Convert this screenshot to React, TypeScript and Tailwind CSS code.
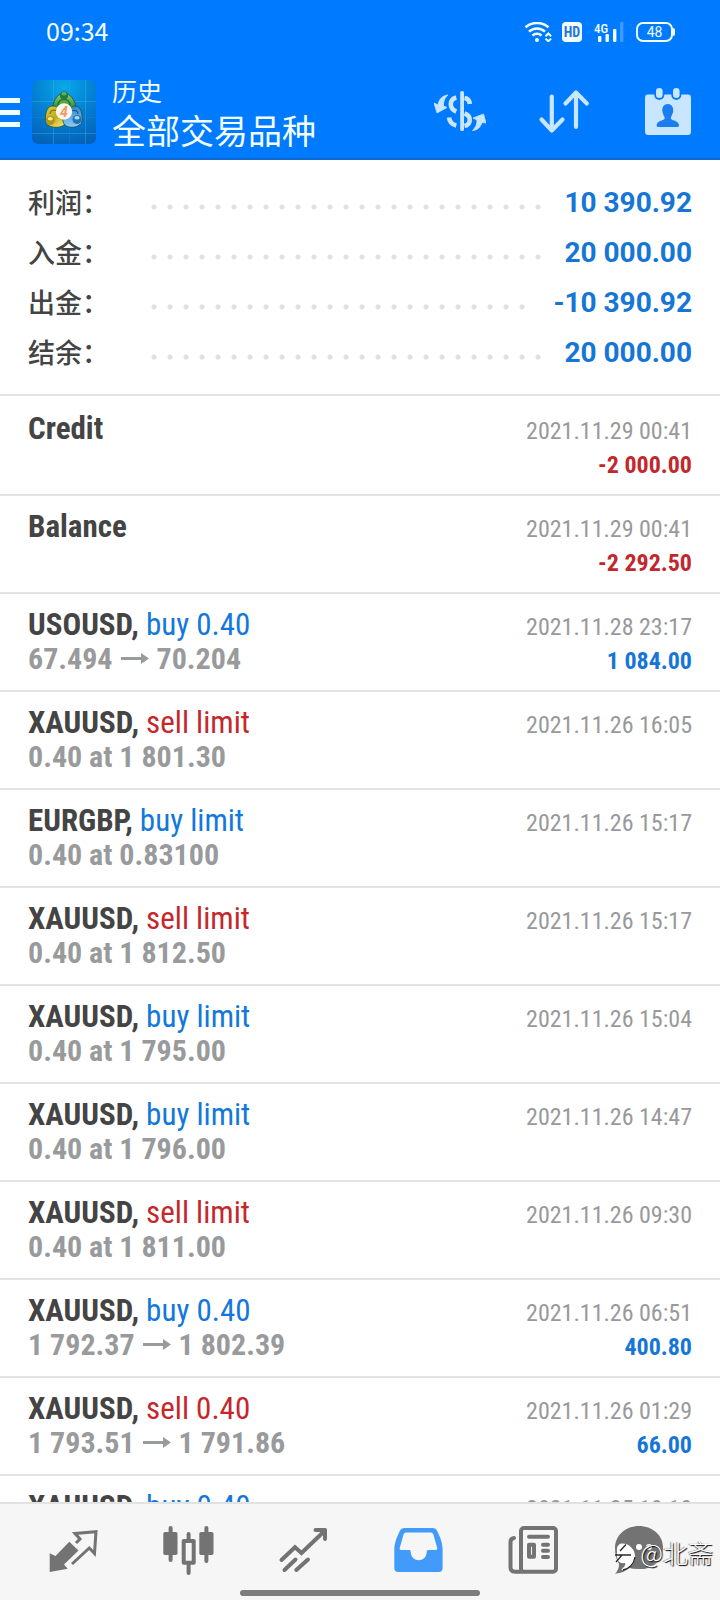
import type { ReactNode } from "react";

type Side = "buy" | "sell";

type Entry = {
  title: string;
  side?: Side;
  action?: string;
  open?: string;
  close?: string;
  time: string;
  amount?: string;
};

const summary = [
  { label: "利润：", value: "10 390.92" },
  { label: "入金：", value: "20 000.00" },
  { label: "出金：", value: "-10 390.92" },
  { label: "结余：", value: "20 000.00" },
];

const entries: Entry[] = [
  { title: "Credit", time: "2021.11.29 00:41", amount: "-2 000.00" },
  { title: "Balance", time: "2021.11.29 00:41", amount: "-2 292.50" },
  { title: "USOUSD,", side: "buy", action: "buy 0.40", open: "67.494", close: "70.204", time: "2021.11.28 23:17", amount: "1 084.00" },
  { title: "XAUUSD,", side: "sell", action: "sell limit", open: "0.40 at 1 801.30", time: "2021.11.26 16:05" },
  { title: "EURGBP,", side: "buy", action: "buy limit", open: "0.40 at 0.83100", time: "2021.11.26 15:17" },
  { title: "XAUUSD,", side: "sell", action: "sell limit", open: "0.40 at 1 812.50", time: "2021.11.26 15:17" },
  { title: "XAUUSD,", side: "buy", action: "buy limit", open: "0.40 at 1 795.00", time: "2021.11.26 15:04" },
  { title: "XAUUSD,", side: "buy", action: "buy limit", open: "0.40 at 1 796.00", time: "2021.11.26 14:47" },
  { title: "XAUUSD,", side: "sell", action: "sell limit", open: "0.40 at 1 811.00", time: "2021.11.26 09:30" },
  { title: "XAUUSD,", side: "buy", action: "buy 0.40", open: "1 792.37", close: "1 802.39", time: "2021.11.26 06:51", amount: "400.80" },
  { title: "XAUUSD,", side: "sell", action: "sell 0.40", open: "1 793.51", close: "1 791.86", time: "2021.11.26 01:29", amount: "66.00" },
  { title: "XAUUSD,", side: "buy", action: "buy 0.40", time: "2021.11.25 10:10" },
];

function StatusBar() {
  return (
    <div className="flex h-16 items-center justify-between pl-[46px] pr-[45px]">
      <span className="pb-1 font-['Noto_Sans_CJK_SC',sans-serif] text-[25px] leading-8">09:34</span>
      <div className="flex items-center">
        <svg className="mr-2 h-5 w-[30px]" viewBox="0 0 30 20" fill="none" stroke="currentColor" strokeWidth="2.6">
          <path d="M1.5 5.2C8 -0.4 18 -0.4 24.5 5.2" />
          <path d="M5 9.6C9.5 5.4 16.5 5.4 21 9.6" />
          <path d="M8.5 13.6C11 11.2 15 11.2 17.5 13.6" />
          <circle cx="13" cy="18" r="2" fill="currentColor" stroke="none" />
          <path d="M21.5 14.2L24.3 11.5L27.1 14.2M21.5 16.6L24.3 19.3L27.1 16.6" strokeWidth="2" />
        </svg>
        <span className="mr-3 flex h-5 w-5 items-center justify-center rounded-[4px] bg-[#f1ffff] font-['Roboto_Condensed',Roboto,sans-serif] text-sm font-bold text-[#2679d3]">
          HD
        </span>
        <svg className="mr-3 h-5 w-[30px]" viewBox="0 0 30 20" fill="currentColor">
          <text x="0" y="11" fontSize="13" fontWeight="500" fontFamily="Roboto Condensed, Roboto, sans-serif">4G</text>
          <rect x="4" y="14" width="3.4" height="6" rx="1" />
          <rect x="11.5" y="12" width="3.4" height="8" rx="1" />
          <rect x="19" y="7" width="3.4" height="13" rx="1" />
          <rect x="26" y="0" width="3.4" height="20" rx="1" opacity="0.25" />
        </svg>
        <span className="flex h-5 w-[37px] items-center justify-center rounded-[7px] border-2 border-current font-['Roboto',sans-serif] text-sm">
          48
        </span>
        <span className="h-2 w-0.5 rounded-r bg-current" />
      </div>
    </div>
  );
}

function AppLogo() {
  return (
    <svg className="h-16 w-16 shrink-0" viewBox="0 0 64 64">
      <defs>
        <radialGradient id="sky" cx="0.5" cy="0.1" r="0.95">
          <stop offset="0" stopColor="#08a8ea" />
          <stop offset="0.5" stopColor="#0480d2" />
          <stop offset="1" stopColor="#0362b8" />
        </radialGradient>
        <linearGradient id="green" x1="0" y1="0" x2="0" y2="1">
          <stop offset="0" stopColor="#9bd07a" />
          <stop offset="0.6" stopColor="#3c9a3a" />
          <stop offset="1" stopColor="#7dba3c" />
        </linearGradient>
        <linearGradient id="yellow" x1="0" y1="0" x2="0.6" y2="1">
          <stop offset="0" stopColor="#d8cf3c" />
          <stop offset="0.6" stopColor="#c2ab22" />
          <stop offset="1" stopColor="#e6dc60" />
        </linearGradient>
        <linearGradient id="blue" x1="0" y1="0" x2="0" y2="1">
          <stop offset="0" stopColor="#2f86cc" />
          <stop offset="1" stopColor="#8fcdf4" />
        </linearGradient>
      </defs>
      <rect width="64" height="64" rx="6" fill="url(#sky)" />
      <path d="M0 21.5H64M0 53.5H64M21.5 0V64M53.5 0V64" stroke="#5cc4f2" strokeOpacity="0.3" />
      <path d="M0 37.5H64M37.5 0V64" stroke="#5cc4f2" strokeOpacity="0.1" />
      <g stroke="#1c4f4c" strokeWidth="0.8">
        <path d="M32 12.5C37 13 43.5 20 43.8 27C44 32 38 34 32 34C26 34 20.5 32 20.8 27C21 20 27 13 32 12.5Z" fill="url(#green)" />
        <path d="M18 26.5C22 25 27 27 30 31C33 35 35 41 32 45C28 48.5 18 48 14.5 44C12.5 40 13 29 18 26.5Z" fill="url(#yellow)" />
        <path d="M46 26.5C42 25 38 27 34.5 31C31 34.5 29 41 33 45C37 48.5 46 48 49.5 43C51 38 50 29 46 26.5Z" fill="url(#blue)" />
      </g>
      <path d="M26 26C25.5 21.5 29 19.5 32 19.5S38.5 21.5 38 26" fill="none" stroke="#23732f" strokeWidth="1.5" />
      <path d="M18 34C18.5 29.5 22 29.5 25 31" fill="none" stroke="#857414" strokeWidth="1.2" />
      <path d="M46 34C45.5 30.5 43 29.5 40 31" fill="none" stroke="#185a96" strokeWidth="1.2" />
      <circle cx="32" cy="15.5" r="4.2" fill="#227c3a" />
      <ellipse cx="32" cy="13.7" rx="2.6" ry="1.7" fill="#5fb068" />
      <circle cx="18.3" cy="40.5" r="4.5" fill="#b1951a" />
      <ellipse cx="18.3" cy="38.7" rx="2.6" ry="1.8" fill="#f4ea85" />
      <circle cx="45" cy="39.5" r="4.5" fill="#2274b6" />
      <ellipse cx="45" cy="37.7" rx="2.6" ry="1.8" fill="#a9daf6" />
      <circle cx="32" cy="31.5" r="8.2" fill="#fbf6ef" />
      <text x="32" y="36.5" textAnchor="middle" fontSize="14" fontStyle="italic" fontWeight="700" fontFamily="Roboto, sans-serif" fill="#f09a62">4</text>
    </svg>
  );
}

function HeaderButton({ label, children }: { label: string; children: ReactNode }) {
  return (
    <button aria-label={label} className="shrink-0 text-[#c8e6ff]">
      <svg className="h-[52px] w-[52px]" viewBox="0 0 52 52" fill="currentColor">
        {children}
      </svg>
    </button>
  );
}

function Header() {
  return (
    <header className="shrink-0 border-b-2 border-[#1169d0] bg-[#007aff] text-[#f1ffff]">
      <StatusBar />
      <div className="flex h-[94px] items-center pr-[26px] pt-0.5">
        <button aria-label="Menu" className="mr-3 flex w-5 shrink-0 flex-col gap-[7px]">
          <span className="h-[5px] bg-current" />
          <span className="h-[5px] bg-current" />
          <span className="h-[5px] bg-current" />
        </button>
        <AppLogo />
        <div className="ml-4 min-w-0 flex-1 font-['Noto_Sans_CJK_SC',sans-serif]">
          <p className="text-[25px] leading-9">历史</p>
          <h1 className="text-[34px] leading-[44px]">全部交易品种</h1>
        </div>
        <div className="flex gap-[52px]">
          <HeaderButton label="Symbols">
            <rect x="26.2" y="5" width="3.8" height="40" rx="1.6" />
            <path d="M22.3 11.5C15 13.5 15 22.5 22.3 25.5M30.5 12C34 12.5 35.5 14.5 35.8 18M30.5 27.5C38 30 37 38.5 30.5 40M15 31.5C15.5 36 18 38.5 22.3 39.5" fill="none" stroke="currentColor" strokeWidth="4.6" />
            <path d="M14 9C8.5 9.5 5 13 4 19L0 17L3 27L13 21.5L9.5 20C9.5 15 10.5 12 14 9Z" stroke="currentColor" strokeWidth="0.8" strokeLinejoin="round" />
            <path d="M38.5 44.5C44 44 46.5 41 48 36.5L52 37L49.5 28L39 32L43 34C43 38 42 41 38.5 44.5Z" stroke="currentColor" strokeWidth="0.8" strokeLinejoin="round" />
          </HeaderButton>
          <HeaderButton label="Sort">
            <path d="M13.8 10.5V43.5M3.5 33.5L13.8 44.5L24.5 33.5M38 41V6.5M27.5 17.5L38 6.5L48.8 17.5" fill="none" stroke="currentColor" strokeWidth="4.2" strokeLinecap="round" strokeLinejoin="round" />
          </HeaderButton>
          <HeaderButton label="Period">
            <rect x="3" y="8.5" width="46" height="40.5" rx="3" />
            <rect x="12.3" y="-2" width="10" height="16" rx="5" fill="#007aff" />
            <rect x="29.3" y="-2" width="10" height="16" rx="5" fill="#007aff" />
            <rect x="14" y="2" width="6.6" height="10" rx="3.3" />
            <rect x="31" y="2" width="6.6" height="10" rx="3.3" />
            <path d="M25.8 18C29.5 18 31.5 21 31.2 25C31 28 29 30 28.8 32.5C30 35 37 34.5 37 39.5Q37 41 35 41H16.5Q14.6 41 14.6 39.5C14.6 34.5 21.5 35 22.8 32.5C22.6 30 20.5 28 20.3 25C20 21 22 18 25.8 18Z" fill="#1a7df0" />
          </HeaderButton>
        </div>
      </div>
    </header>
  );
}

function Summary() {
  return (
    <dl className="border-b-2 border-[#e3e3e3] px-7 py-[17px]">
      {summary.map((row) => (
        <div key={row.label} className="flex h-[50px] items-center">
          <dt className="w-[114px] shrink-0 font-['Noto_Sans_CJK_SC',sans-serif] text-[27px] font-medium text-[#444]">
            {row.label}
          </dt>
          <span className="mr-[22px] mt-2.5 h-4 flex-1 bg-[radial-gradient(circle_at_12px_8px,#e0e0e0_2px,transparent_3px)] bg-size-[16px_16px] bg-repeat-x" />
          <dd className="pt-0.5 font-['Roboto',sans-serif] text-[28px] font-bold text-[#1676d6]">{row.value}</dd>
        </div>
      ))}
    </dl>
  );
}

function Arrow() {
  return (
    <svg className="mx-2 inline h-4 w-7 align-baseline" viewBox="0 0 28 16" fill="currentColor">
      <rect y="4" width="23" height="3" />
      <path d="M20 0L28 5.5L20 11Z" />
    </svg>
  );
}

function HistoryRow({ entry }: { entry: Entry }) {
  const negative = entry.amount?.startsWith("-");

  return (
    <li className="flex min-h-[98px] items-baseline justify-between border-b-2 border-[#e3e3e3] px-7 pb-2.5 pt-3.5 leading-[34px] first:min-h-[100px] first:pt-4">
      <div>
        <p className="text-[31px] leading-[34px]">
          <span className="font-bold text-[#444]">{entry.title}</span>{" "}
          <span className={entry.side === "sell" ? "text-[#c4282d]" : "text-[#1278dc]"}>{entry.action}</span>
        </p>
        {entry.open && (
          <p className="text-[30px] font-bold leading-[34px] text-[#989a9c]">
            {entry.open}
            {entry.close && (
              <>
                <Arrow />
                {entry.close}
              </>
            )}
          </p>
        )}
      </div>
      <div className="text-right text-[24px] leading-[34px]">
        <p className="text-[#98999b]">{entry.time}</p>
        {entry.amount && (
          <p className={negative ? "font-bold text-[#c1282d]" : "font-bold text-[#1676d6]"}>{entry.amount}</p>
        )}
      </div>
    </li>
  );
}

function NavLink({ label, active, children }: { label: string; active?: boolean; children: ReactNode }) {
  return (
    <a href="#" aria-label={label} className={active ? "text-[#429bfa]" : "text-[#737373]"}>
      <svg className="h-[52px] w-[52px]" viewBox="0 0 52 52" fill="currentColor">
        {children}
      </svg>
    </a>
  );
}

function BottomNav() {
  return (
    <nav className="relative shrink-0 border-t-2 border-[#e2e2e2] bg-[#f6f6f6] pt-5">
      <div className="grid grid-cols-6 justify-items-center px-4">
        <NavLink label="Quotes">
          <path d="M2.7 29.3L8.5 32L22.3 17.7L31.5 26.5L17 40.5L20.7 44.7L2.7 48Z" />
          <path d="M25 40L42.3 24L47.5 29.5L49 7.7L28 9.5L33 15L29 19" fill="none" stroke="currentColor" strokeWidth="3" />
        </NavLink>
        <NavLink label="Charts">
          <rect x="1.3" y="8" width="14.2" height="23" rx="1.8" />
          <rect x="37.3" y="8" width="14.2" height="23" rx="1.8" />
          <rect x="21.7" y="17" width="10" height="21.7" fill="none" stroke="currentColor" strokeWidth="4" strokeLinejoin="round" />
          <path d="M8.6 4V36M44.4 4V37M26.6 10V16M26.6 40V49" stroke="currentColor" strokeWidth="4" strokeLinecap="round" />
        </NavLink>
        <NavLink label="Trade">
          <path d="M4.5 36L18 23.3L24.5 29L48 6.5M7.5 46L18.5 35.5M19.3 46L31 35.5" fill="none" stroke="currentColor" strokeWidth="4" strokeLinecap="round" />
          <path d="M38.5 6H48V15" fill="none" stroke="currentColor" strokeWidth="4" strokeLinecap="round" strokeLinejoin="round" />
        </NavLink>
        <NavLink label="History" active>
          <path fillRule="evenodd" d="M13 4H42Q45 4 46 6.5C49.5 14 51.6 19 51.6 26V44Q51.6 48 47.6 48H7.3Q3.3 48 3.3 44V26C3.3 19 5.5 14 9 6.5Q10 4 13 4ZM15 8.5Q13.3 8.5 12.7 10L8.7 24Q8.2 26 10 26H18.5Q19.7 26 19.7 28C20 39 35.5 39 35.7 28Q35.7 26 37 26H44.8Q46.8 26 46.2 24L42.2 10Q41.7 8.5 40 8.5Z" />
        </NavLink>
        <NavLink label="News">
          <g fill="none" stroke="currentColor" strokeWidth="4" strokeLinecap="round">
            <rect x="15" y="4" width="35" height="43.7" rx="3" />
            <path d="M8 14Q4.5 14.5 4.5 18V43Q4.5 47.7 9 47.7H16" />
            <path d="M23 12.7H42M37 20.7H42M37 26.8H42M37 33H42" />
            <rect x="23" y="20.7" width="5" height="12" strokeLinejoin="round" />
          </g>
        </NavLink>
        <a href="#" aria-label="Messages" className="text-[#737373]">
          <svg className="h-[52px] w-[72px]" viewBox="0 0 72 52" fill="currentColor">
            <path d="M28 2C41 2 52 11 52 23C52 36 42 46 28 45Q22 45 18 44Q13 49 4 49.7Q8 46 8 40C5 35 4 30 4 24C4 11 15 2 28 2Z" />
            <circle cx="28" cy="23" r="3" fill="#fff" />
            <circle cx="38" cy="23" r="3" fill="#fff" />
            <path d="M6 28C5 19 11 19 15 20C19 21 24 26 24 32C24 40 18 46 10 46C13 43 15 41 14 39C8 40 5 36 6 28Z" fill="#fff" />
            <path d="M15 20.5L9 27M4 31H20M11 31L5 38M24 33C23 40 18 45 12 46" fill="none" stroke="#2a2a2a" strokeWidth="1.3" />
          </svg>
        </a>
      </div>
      <span className="absolute right-[7px] top-8 font-['Noto_Sans_CJK_SC',sans-serif] text-[25px] font-light leading-8 text-white [text-shadow:1px_1px_1px_#000,-1px_0_1px_#777]">
        @北斋
      </span>
      <div className="mx-auto mb-1 mt-[14px] h-1.5 w-1/3 rounded-full bg-[#7c7c7c]" />
    </nav>
  );
}

export default function App() {
  return (
    <div className="flex h-dvh flex-col bg-white font-['Roboto_Condensed',Roboto,sans-serif]">
      <Header />
      <main className="min-h-0 flex-1 overflow-hidden">
        <Summary />
        <ul>
          {entries.map((entry) => (
            <HistoryRow key={entry.time + entry.title + entry.open} entry={entry} />
          ))}
        </ul>
      </main>
      <BottomNav />
    </div>
  );
}
